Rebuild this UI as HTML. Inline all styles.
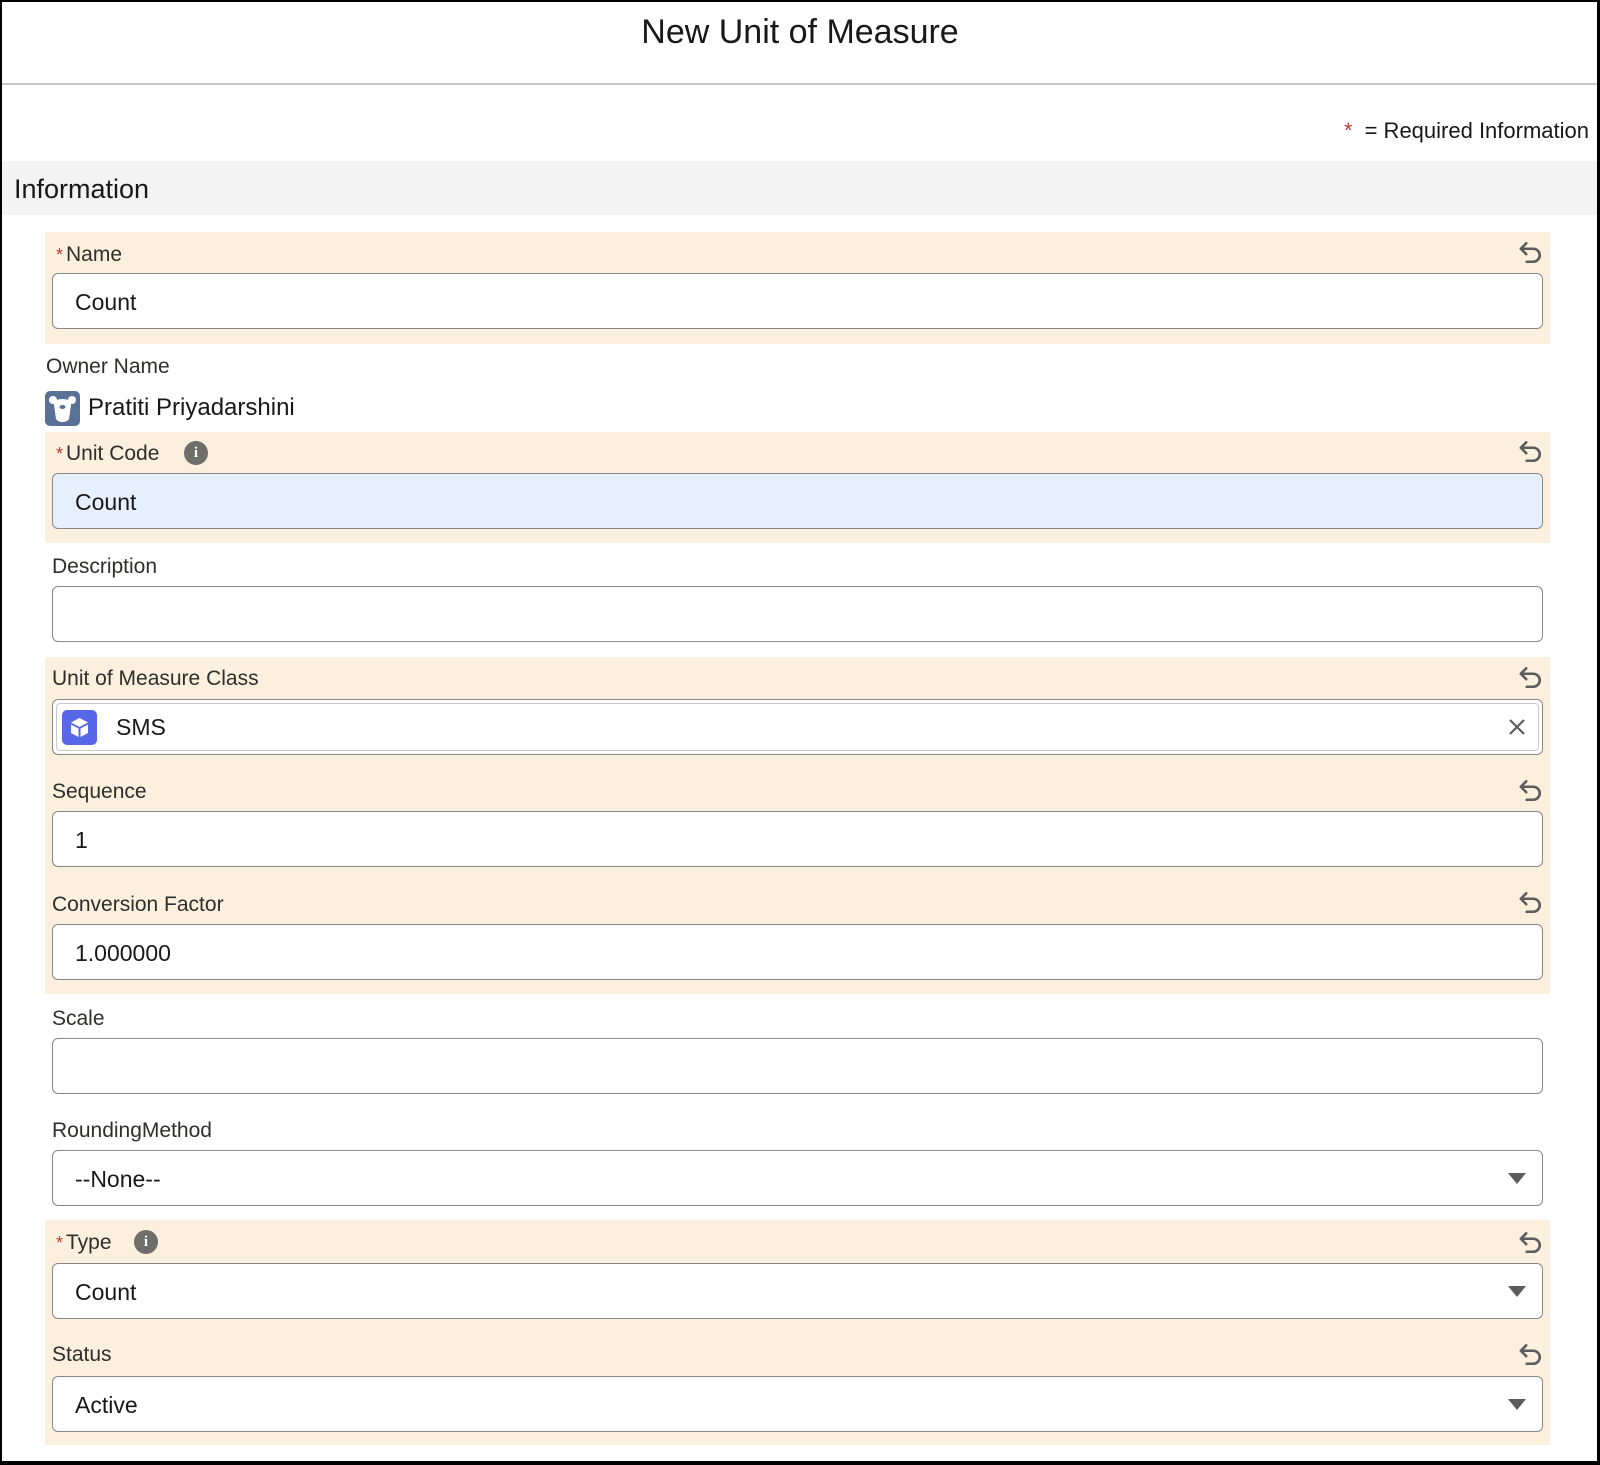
<!DOCTYPE html>
<html><head><meta charset="utf-8"><style>
*{box-sizing:border-box;margin:0;padding:0}
html,body{width:1600px;height:1465px;background:#fff;overflow:hidden}
body{position:relative;font-family:"Liberation Sans",sans-serif;color:#181818}
.frame{position:absolute;left:0;top:0;width:1600px;height:1465px;border-left:2px solid #000;border-top:2px solid #000;border-right:3px solid #000;border-bottom:4px solid #000;z-index:10;pointer-events:none}
.a{position:absolute}
.title{left:0;width:1600px;top:12px;text-align:center;font-size:34px;line-height:40px}
.hr{left:2px;width:1596px;top:83px;height:2px;background:#c9c9c9}
.req{right:11px;top:118px;font-size:22px;line-height:26px}
.req b{color:#c23934;font-weight:normal;margin-right:12px}
.sec{left:2px;width:1596px;top:161px;height:54px;background:#f3f3f3;font-size:27px;line-height:56px;padding-left:12px}
.beige{left:45px;width:1505px;background:#faf0dd}
.lbl{font-size:21px;line-height:24px;color:#2e2e2c}
.lbl i{font-style:normal;color:#c23934;margin-right:3px;font-size:18px}
.inp{left:52px;width:1491px;height:56px;border:1px solid #8a8886;border-radius:6px;background:#fff;font-size:23px;line-height:56px;padding-left:22px}
.undo{width:26px;height:26px}
.arrow{width:0;height:0;border-left:9px solid transparent;border-right:9px solid transparent;border-top:11px solid #5c5c5c}
.info{width:24px;height:24px;border-radius:50%;background:#706e6b;color:#fff;font-size:15px;font-weight:bold;text-align:center;line-height:24px;font-family:"Liberation Serif",serif}
</style></head><body>
<div class="frame"></div>
<div class="a title">New Unit of Measure</div>
<div class="a hr"></div>
<div class="a req"><b>*</b>= Required Information</div>
<div class="a sec">Information</div>

<div class="a beige" style="top:232px;height:112px"></div>
<div class="a lbl" style="left:56px;top:243px"><i>*</i>Name</div>
<div class="a inp" style="top:273px">Count</div>

<div class="a lbl" style="left:46px;top:355px">Owner Name</div>
<svg class="a" style="left:45px;top:391px" width="35" height="35" viewBox="0 0 35 35"><rect width="35" height="35" rx="5" fill="#5a7196"/><circle cx="8" cy="9" r="4" fill="#fff"/><circle cx="27" cy="9" r="4" fill="#fff"/><path d="M9 14 Q9 8 17.5 8 Q26 8 26 14 L24 28 Q22 31 17.5 31 Q13 31 11 28 Z" fill="#fff"/><ellipse cx="17.5" cy="16" rx="3" ry="2" fill="#5a7196"/></svg>
<div class="a" style="left:88px;top:394px;font-size:24px;line-height:28px">Pratiti Priyadarshini</div>

<div class="a beige" style="top:432px;height:111px"></div>
<div class="a lbl" style="left:56px;top:442px"><i>*</i>Unit Code</div>
<div class="a info" style="left:184px;top:441px">i</div>
<div class="a inp" style="top:473px;background:#e6f0fd">Count</div>

<div class="a lbl" style="left:52px;top:555px">Description</div>
<div class="a inp" style="top:586px"></div>

<div class="a beige" style="top:657px;height:337px"></div>
<div class="a lbl" style="left:52px;top:667px">Unit of Measure Class</div>
<div class="a inp" style="top:699px;padding:3px"><div style="height:48px;border:1px solid #c9c9c9;border-radius:4px;position:relative;font-size:23px;line-height:46px;padding-left:59px">SMS
<svg style="position:absolute;left:5px;top:6px" width="35" height="35" viewBox="0 0 35 35"><rect width="35" height="35" rx="5" fill="#5867e8"/><path d="M17.5 8 L26 12.5 L17.5 17 L9 12.5 Z" fill="#fff"/><path d="M9 14.5 L16.5 18.5 L16.5 27 L9 23 Z" fill="#fff"/><path d="M26 14.5 L18.5 18.5 L18.5 27 L26 23 Z" fill="#fff"/></svg>
<svg style="position:absolute;right:12px;top:14px" width="18" height="18" viewBox="0 0 18 18"><path d="M2 2 L16 16 M16 2 L2 16" stroke="#5c5c5c" stroke-width="2.2"/></svg></div></div>
<div class="a lbl" style="left:52px;top:780px">Sequence</div>
<div class="a inp" style="top:811px">1</div>
<div class="a lbl" style="left:52px;top:893px">Conversion Factor</div>
<div class="a inp" style="top:924px">1.000000</div>

<div class="a lbl" style="left:52px;top:1007px">Scale</div>
<div class="a inp" style="top:1038px"></div>

<div class="a lbl" style="left:52px;top:1119px">RoundingMethod</div>
<div class="a inp" style="top:1150px">--None--</div>
<div class="a arrow" style="left:1508px;top:1173px"></div>

<div class="a beige" style="top:1220px;height:225px"></div>
<div class="a lbl" style="left:56px;top:1231px"><i>*</i>Type</div>
<div class="a info" style="left:134px;top:1230px">i</div>
<div class="a inp" style="top:1263px">Count</div>
<div class="a arrow" style="left:1508px;top:1286px"></div>
<div class="a lbl" style="left:52px;top:1343px">Status</div>
<div class="a inp" style="top:1376px">Active</div>
<div class="a arrow" style="left:1508px;top:1399px"></div>

<svg width="0" height="0" style="position:absolute"><defs><symbol id="u" viewBox="0 0 24 24"><path d="M4 9 H15 A6 6 0 0 1 15 21 H9" fill="none" stroke="#5c5c5c" stroke-width="2.4" stroke-linecap="round"/><path d="M8.5 4 L3.5 9 L8.5 14" fill="none" stroke="#5c5c5c" stroke-width="2.4" stroke-linecap="round" stroke-linejoin="round"/></symbol></defs></svg>
<svg class="a undo" style="left:1517px;top:239px"><use href="#u"/></svg>
<svg class="a undo" style="left:1517px;top:438px"><use href="#u"/></svg>
<svg class="a undo" style="left:1517px;top:664px"><use href="#u"/></svg>
<svg class="a undo" style="left:1517px;top:777px"><use href="#u"/></svg>
<svg class="a undo" style="left:1517px;top:889px"><use href="#u"/></svg>
<svg class="a undo" style="left:1517px;top:1229px"><use href="#u"/></svg>
<svg class="a undo" style="left:1517px;top:1341px"><use href="#u"/></svg>
</body></html>
